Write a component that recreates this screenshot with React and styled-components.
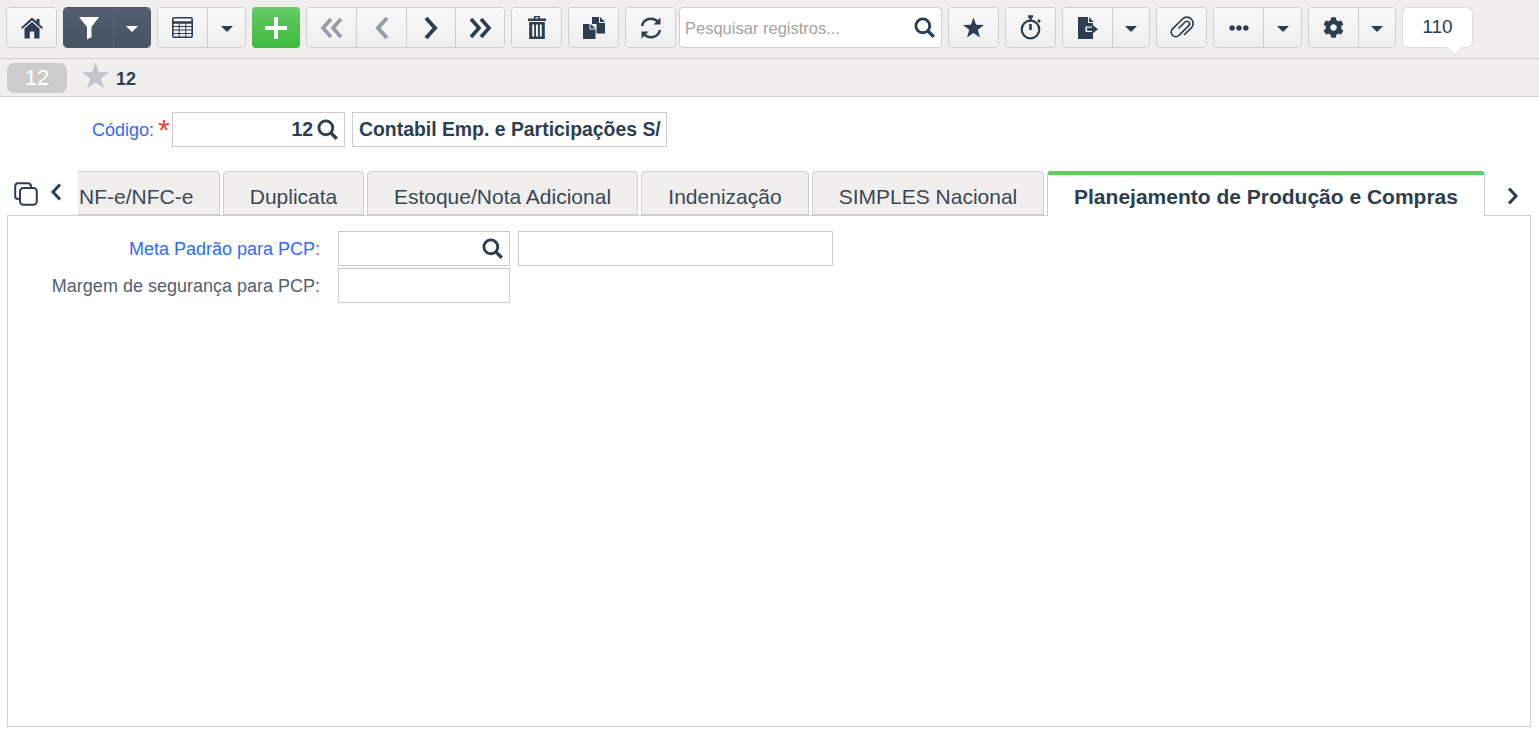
import styled, { createGlobalStyle } from "styled-components";
import { FaCog, FaEllipsisH } from "react-icons/fa";

const INK = "#2c3e50";

const GlobalStyle = createGlobalStyle`
  html, body {
    margin: 0;
    padding: 0;
    background: #fff;
  }
  body {
    font-family: "Liberation Sans", Arial, sans-serif;
    color: ${INK};
  }
  * {
    box-sizing: border-box;
  }
`;

const Page = styled.div`
  width: 1539px;
  height: 734px;
  overflow: hidden;
  background: #fff;
`;

// barra superior
const Toolbar = styled.div`
  height: 59px;
  padding: 7px 6px 0;
  display: flex;
  align-items: flex-start;
  gap: 6px;
  background: #f0efee;
  border-bottom: 1px solid #cfcfcf;
`;

const Group = styled.div`
  display: flex;
  height: 41px;
  border: 1px solid ${(p) => (p.$dark ? "#4a5768" : "#cfcfcf")};
  border-radius: 4px;
  overflow: hidden;
  flex: none;
`;

const Btn = styled.div`
  width: ${(p) => p.$w || 49}px;
  display: flex;
  align-items: center;
  justify-content: center;
  color: ${(p) => (p.$dim ? "#969ca7" : INK)};
  background: linear-gradient(#f8f8f8, #efefef);
  & + & {
    border-left: 1px solid #cfcfcf;
  }
`;

const DarkBtn = styled(Btn)`
  color: #fff;
  background: linear-gradient(#515e70, #465364);
  & + & {
    border-left: 1px solid #5b6777;
  }
`;

const AddBtn = styled.div`
  flex: none;
  width: 48px;
  height: 41px;
  display: flex;
  align-items: center;
  justify-content: center;
  border-radius: 4px;
  background: linear-gradient(#66cb66, #3cba3c);
`;

const Caret = styled.span`
  width: 0;
  height: 0;
  margin-top: 3px;
  border-left: 6px solid transparent;
  border-right: 6px solid transparent;
  border-top: 6px solid currentColor;
`;

const SearchBox = styled.div`
  flex: none;
  width: 263px;
  height: 41px;
  margin-left: -3px;
  padding: 0 6px 0 5px;
  display: flex;
  align-items: center;
  justify-content: space-between;
  background: #fff;
  border: 1px solid #cfcfcf;
  border-radius: 4px;
`;

const Placeholder = styled.span`
  font-size: 16.5px;
  padding-top: 1px;
  color: #a3a3a3;
`;

const Counter = styled.div`
  position: relative;
  flex: none;
  width: 71px;
  height: 41px;
  display: flex;
  align-items: center;
  justify-content: center;
  padding-bottom: 1px;
  font-size: 19px;
  background: #fff;
  border: 1px solid #dcdcdc;
  border-radius: 6px;

  &::after {
    content: "";
    position: absolute;
    left: 44px;
    bottom: -8px;
    width: 14px;
    height: 14px;
    background: #fff;
    border-right: 1px solid #d6d6d6;
    border-bottom: 1px solid #d6d6d6;
    transform: rotate(45deg) scale(0.75);
  }
`;

// segunda faixa com o registro atual
const RecordBar = styled.div`
  height: 38px;
  padding: 4px 7px 0;
  display: flex;
  align-items: flex-start;
  background: #f0efee;
  border-bottom: 1px solid #cfcfcf;
`;

const Badge = styled.div`
  width: 60px;
  height: 30px;
  display: flex;
  align-items: center;
  justify-content: center;
  font-size: 22px;
  color: #fff;
  background: #cccccc;
  border-radius: 7px;
`;

const RecordStar = styled.span`
  margin: -1px 7px 0 15px;
  display: flex;
  color: #c2c5cd;
`;

const RecordCode = styled.b`
  font-size: 18px;
  line-height: 30px;
  margin-top: 1px;
`;

// campo código
const CodeRow = styled.div`
  height: 35px;
  margin-top: 15px;
  display: flex;
  align-items: center;
`;

const Label = styled.span`
  text-align: right;
  font-size: 18px;
  padding-top: 2px;
  flex: none;
  width: ${(p) => p.$w}px;
  color: ${(p) => (p.$link ? "#2f6bff" : "#55606e")};
`;

const Required = styled.span`
  flex: none;
  width: 18px;
  padding-left: 4px;
  font-size: 30px;
  line-height: 30px;
  height: 30px;
  color: #e2423a;
`;

const Field = styled.div`
  flex: none;
  width: ${(p) => p.$w}px;
  height: 35px;
  margin-left: ${(p) => p.$ml || 0}px;
  padding: 0 ${(p) => p.$pr || 6}px 0 6px;
  display: flex;
  align-items: center;
  justify-content: ${(p) => (p.$left ? "flex-start" : "flex-end")};
  gap: 4px;
  font-size: 19.4px;
  font-weight: bold;
  white-space: nowrap;
  background: #fff;
  border: 1px solid #cccccc;
`;

// abas
const TabRow = styled.div`
  height: 45px;
  margin-top: 24px;
  padding-left: 14px;
  display: flex;
  align-items: flex-start;
  position: relative;
  z-index: 1;
`;

const TabTools = styled.div`
  flex: none;
  width: 64px;
  height: 44px;
  padding-top: 11px;
  display: flex;
  align-items: flex-start;
  gap: 11px;
`;

const Tab = styled.div`
  flex: none;
  height: ${(p) => (p.$active ? 45 : 44)}px;
  width: ${(p) => p.$w}px;
  margin-right: 3px;
  display: flex;
  align-items: center;
  justify-content: center;
  padding-top: ${(p) => (p.$active ? 3 : 7)}px;
  font-size: 21px;
  white-space: nowrap;
  font-weight: ${(p) => (p.$active ? "bold" : "normal")};
  color: ${(p) => (p.$active ? INK : "#3b4755")};
  background: ${(p) => (p.$active ? "#fff" : "#f0efee")};
  border: 1px solid #cfcfcf;
  border-bottom: ${(p) => (p.$active ? "none" : "1px solid #cfcfcf")};
  border-top: ${(p) => (p.$active ? "4px solid #5fcb63" : "1px solid #cfcfcf")};
  border-radius: 4px 4px 0 0;
`;

const ClippedTab = styled(Tab)`
  justify-content: flex-start;
  padding-left: 1px;
  border-left: none;
  border-top-left-radius: 0;
`;

const NextTab = styled.div`
  margin-left: 18px;
  padding-top: 15px;
  display: flex;
`;

const Panel = styled.div`
  width: 1524px;
  height: 512px;
  margin: -1px 0 0 7px;
  padding-top: 15px;
  display: flex;
  flex-direction: column;
  gap: 2px;
  border: 1px solid #cfcfcf;
`;

const FormRow = styled.div`
  display: flex;
  align-items: center;
`;

const Icon = ({ w = 20, h = 20, vb = "0 0 24 24", children }) => (
  <svg width={w} height={h} viewBox={vb} fill="currentColor">
    {children}
  </svg>
);

const Line = ({ d, w = 20, h = 20, sw = 3.4, vb = "0 0 24 24" }) => (
  <svg width={w} height={h} viewBox={vb} fill="none" stroke="currentColor" strokeWidth={sw}>
    <path d={d} />
  </svg>
);

const Search = ({ size = 21 }) => (
  <svg width={size} height={size} viewBox="0 0 20 20" fill="none" stroke={INK} strokeWidth="2.7" style={{ flex: "none" }}>
    <circle cx="8.4" cy="8.4" r="6.6" />
    <path d="M13.2 13.2 L18.8 18.8" strokeWidth="3.2" />
  </svg>
);

const Star = ({ size = 24 }) => (
  <svg width={size} height={size} viewBox="0 0 24 24" fill="currentColor">
    <path d="M12 0.5 L15 8.8 L24 9.1 L16.9 14.6 L19.4 23.4 L12 18.3 L4.6 23.4 L7.1 14.6 L0 9.1 L9 8.8 Z" />
  </svg>
);

const Toolbar1 = () => (
  <Toolbar>
    <Group>
      <Btn>
        <Icon w={22} h={22} vb="0 0 22 22">
          <path d="M11 0.5 L15.5 4.6 V2 H18.5 V7.3 L22 10.5 L20.8 12 L11 3.4 L1.2 12 L0 10.5 Z" />
          <path d="M3.5 11.5 L11 5 L18.5 11.5 V21.5 H13.2 V14.5 H8.8 V21.5 H3.5 Z" />
        </Icon>
      </Btn>
    </Group>

    <Group $dark>
      <DarkBtn>
        <Icon w={20} h={24} vb="0 0 20 24">
          <path d="M0 1 H20 L12.5 11 V21 L8 23.5 V11 Z" />
        </Icon>
      </DarkBtn>
      <DarkBtn $w={37}>
        <Caret />
      </DarkBtn>
    </Group>

    <Group>
      <Btn>
        <svg width="21" height="21" viewBox="0 0 21 21" fill="none" stroke={INK} strokeWidth="1">
          <rect x="0.8" y="0.8" width="19.4" height="19.4" rx="1.5" strokeWidth="1.6" />
          <path d="M1 5.5 H20" strokeWidth="2.4" />
          <path d="M1 9.5 H20 M1 13 H20 M1 16.5 H20 M7.2 6 V20 M13.8 6 V20" />
        </svg>
      </Btn>
      <Btn $w={38}>
        <Caret />
      </Btn>
    </Group>

    <AddBtn>
      <svg width="22" height="22" viewBox="0 0 22 22" fill="#fff">
        <path d="M9 0 H13 V9 H22 V13 H13 V22 H9 V13 H0 V9 H9 Z" />
      </svg>
    </AddBtn>

    <Group>
      <Btn $dim>
        <Line w={24} h={22} sw={3.6} vb="0 0 24 22" d="M11 2 L3 11 L11 20 M21 2 L13 11 L21 20" />
      </Btn>
      <Btn $dim $w={50}>
        <Line w={16} h={24} sw={4} vb="0 0 16 24" d="M13 2 L4 12 L13 22" />
      </Btn>
      <Btn>
        <Line w={16} h={24} sw={4} vb="0 0 16 24" d="M3 2 L12 12 L3 22" />
      </Btn>
      <Btn>
        <Line w={24} h={22} sw={3.6} vb="0 0 24 22" d="M3 2 L11 11 L3 20 M13 2 L21 11 L13 20" />
      </Btn>
    </Group>

    <Group>
      <Btn>
        <Icon w={18} h={23} vb="0 0 18 23">
          <path d="M6 0 H12 V2.5 H18 V5 H0 V2.5 H6 Z M7.5 1.2 V2.5 H10.5 V1.2 Z" />
          <path d="M1.2 6 H16.8 V23 H1.2 Z M4.2 8.5 V20.5 H6.2 V8.5 Z M8 8.5 V20.5 H10 V8.5 Z M11.8 8.5 V20.5 H13.8 V8.5 Z" fillRule="evenodd" />
        </Icon>
      </Btn>
    </Group>

    <Group>
      <Btn>
        <Icon w={22} h={22} vb="0 0 22 22">
          <path d="M9 0 H16 L16 6 H22 V16.5 H13.5 V7 H9 Z" />
          <path d="M17 0 L22 5 H17 Z" />
          <path d="M0 7 H6.5 V12.5 H12.5 V22 H0 Z" />
          <path d="M7.5 7 L12.5 11.5 H7.5 Z" />
        </Icon>
      </Btn>
    </Group>

    <Group>
      <Btn>
        <svg width="22" height="22" viewBox="0 0 22 22" fill="none" stroke={INK} strokeWidth="2.4">
          <path d="M2 9 A9.2 9.2 0 0 1 18 5" />
          <path d="M20 13 A9.2 9.2 0 0 1 4 17" />
          <path d="M20.5 0.5 V7.5 H13.5 Z M1.5 21.5 V14.5 H8.5 Z" fill={INK} stroke="none" />
        </svg>
      </Btn>
    </Group>

    <SearchBox>
      <Placeholder>Pesquisar registros...</Placeholder>
      <Search />
    </SearchBox>

    <Group>
      <Btn>
        <Star size={21} />
      </Btn>
    </Group>

    <Group>
      <Btn>
        <svg width="22" height="25" viewBox="0 0 22 25" fill="none" stroke={INK} strokeWidth="2.2">
          <circle cx="10.5" cy="14.5" r="8.8" />
          <path d="M10.5 9 V15" strokeWidth="2.6" />
          <path d="M8 1.5 H13 M10.5 1.5 V5 M18 5 L20 7" strokeWidth="2.6" />
        </svg>
      </Btn>
    </Group>

    <Group>
      <Btn>
        <Icon w={20} h={22} vb="0 0 20 22">
          <path d="M0 0 H10 V6 H15 V9.5 H7.5 V15 H15 V22 H0 Z" />
          <path d="M11 0 L15.5 5 H11 Z" />
          <path d="M9 10.8 H14 V7.5 L20 12.3 L14 17 V13.8 H9 Z" />
        </Icon>
      </Btn>
      <Btn $w={37}>
        <Caret />
      </Btn>
    </Group>

    <Group>
      <Btn>
        <svg width="24" height="24" viewBox="0 0 24 24" fill="none" stroke={INK} strokeWidth="1.7">
          <path d="M8.5 12.5 L15 6 A2.6 2.6 0 0 1 18.7 9.7 L9 19.4 A4.6 4.6 0 0 1 2.5 12.9 L12.5 3 A6.2 6.2 0 0 1 21.3 11.8 L14 19" />
        </svg>
      </Btn>
    </Group>

    <Group>
      <Btn>
        <FaEllipsisH size={20} />
      </Btn>
      <Btn $w={38}>
        <Caret />
      </Btn>
    </Group>

    <Group>
      <Btn>
        <FaCog size={21} />
      </Btn>
      <Btn $w={37}>
        <Caret />
      </Btn>
    </Group>

    <Counter>110</Counter>
  </Toolbar>
);

const App = () => {
  return (
    <Page>
      <GlobalStyle />
      <Toolbar1 />

      <RecordBar>
        <Badge>12</Badge>
        <RecordStar>
          <Star size={27} />
        </RecordStar>
        <RecordCode>12</RecordCode>
      </RecordBar>

      <CodeRow>
        <Label $w={154} $link>
          Código:
        </Label>
        <Required>*</Required>
        <Field $w={173} $pr={6}>
          12
          <Search />
        </Field>
        <Field $w={315} $ml={7} $left>
          Contabil Emp. e Participações S/
        </Field>
      </CodeRow>

      <TabRow>
        <TabTools>
          <svg width="24" height="24" viewBox="0 0 24 24" fill="none" stroke={INK} strokeWidth="2" style={{ flex: "none" }}>
            <path d="M5.5 17 H4 A3 3 0 0 1 1.2 14 V4 A3 3 0 0 1 4 1.2 H14 A3 3 0 0 1 17 4 V5" />
            <rect x="6" y="6" width="16.8" height="16.8" rx="3.5" />
          </svg>
          <Line w={14} h={20} sw={3} vb="0 0 14 20" d="M11 2.5 L4 10 L11 17.5" />
        </TabTools>
        <ClippedTab $w={142}>NF-e/NFC-e</ClippedTab>
        <Tab $w={141}>Duplicata</Tab>
        <Tab $w={271}>Estoque/Nota Adicional</Tab>
        <Tab $w={168}>Indenização</Tab>
        <Tab $w={232}>SIMPLES Nacional</Tab>
        <Tab $w={438} $active>
          Planejamento de Produção e Compras
        </Tab>
        <NextTab>
          <Line w={14} h={20} sw={3} vb="0 0 14 20" d="M3 2.5 L10 10 L3 17.5" />
        </NextTab>
      </TabRow>

      <Panel>
        <FormRow>
          <Label $w={312} $link>
            Meta Padrão para PCP:
          </Label>
          <Field $w={172} $ml={18} $pr={6}>
            <Search />
          </Field>
          <Field $w={315} $ml={8} />
        </FormRow>
        <FormRow>
          <Label $w={312}>Margem de segurança para PCP:</Label>
          <Field $w={172} $ml={18} />
        </FormRow>
      </Panel>
    </Page>
  );
};

export default App;
